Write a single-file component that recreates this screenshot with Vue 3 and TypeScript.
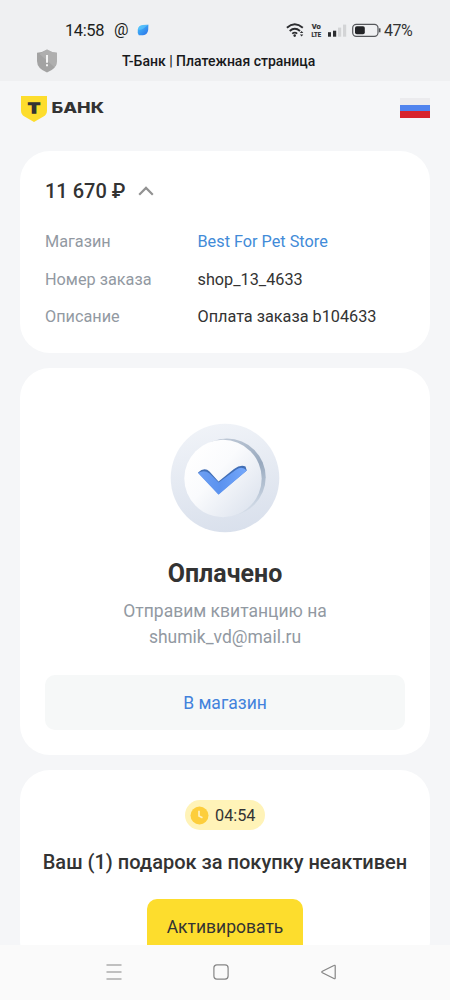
<script setup lang="ts">
interface Detail {
  label: string
  value: string
  link?: boolean
}

const details: Detail[] = [
  { label: 'Магазин', value: 'Best For Pet Store', link: true },
  { label: 'Номер заказа', value: 'shop_13_4633' },
  { label: 'Описание', value: 'Оплата заказа b104633' },
]
</script>

<template>
  <div class="phone">
    <header class="top">
      <div class="status">
        <span class="time">14:58</span>
        <svg class="at" width="15" height="18" viewBox="0 0 15 18">
          <text x="0" y="14" textLength="14.500" lengthAdjust="spacingAndGlyphs">@</text>
        </svg>
        <svg class="leaf" width="12" height="12" viewBox="0 0 12 12">
          <defs>
            <linearGradient id="leaf" x1="0" y1="0" x2="1" y2="1">
              <stop offset="0" stop-color="#45c4fb" />
              <stop offset="1" stop-color="#2b6fe8" />
            </linearGradient>
          </defs>
          <path d="M.8 5.500Q1.500 1.200 6 .9L11.400.7 11.200 6Q10.500 10.800 6 11.200L1.800 11.300Q.2 9 .8 5.500Z" fill="url(#leaf)" />
          <path d="M.8 5.500Q4 6.500 6.500 4.500T11.400.7L6 .9Q1.500 1.200.8 5.500Z" fill="#6ad2ff" opacity=".5" />
        </svg>
        <svg class="signals" width="96" height="20" viewBox="0 0 96 20">
          <g fill="none" stroke="#2c2d30" stroke-width="1.900">
            <path d="M.9 7.700Q8.700.9 16.800 7.700" />
            <path d="M3.700 10.900Q8.800 6.700 14 10.900" />
            <path d="M6.200 13.700Q8.800 11.700 11.200 13.700" stroke-width="1.700" />
          </g>
          <circle cx="8.700" cy="15.600" r="1.300" fill="#2c2d30" />
          <path d="M13.900 13l1.700-2 1.700 2ZM13.900 14.600l1.700 2 1.700-2Z" fill="#2c2d30" />
          <text x="25.700" y="9" textLength="9" lengthAdjust="spacingAndGlyphs" class="volte">Vo</text>
          <text x="25.500" y="16.800" textLength="9.500" lengthAdjust="spacingAndGlyphs" class="volte">LTE</text>
          <rect x="42" y="12.200" width="3" height="4.500" fill="#2c2d30" />
          <rect x="47" y="10.700" width="3.200" height="6" fill="#2c2d30" />
          <rect x="52" y="7.600" width="3.200" height="9.100" fill="#d3d4d6" />
          <rect x="57" y="4.600" width="3.200" height="12.100" fill="#d3d4d6" />
          <rect x="66.700" y="4.300" width="25.300" height="12" rx="3.600" fill="none" stroke="#55575b" stroke-width="1.200" />
          <rect x="69" y="6.300" width="9.800" height="8" rx="1.800" fill="#222326" />
          <path d="M93.700 8.300v4" stroke="#55575b" stroke-width="1.600" />
        </svg>
        <span class="percent">47%</span>
      </div>
      <div class="titlebar">
        <svg class="shield" width="22" height="24" viewBox="0 0 22 24">
          <path d="M11 .5Q15.500 3.500 21 3.700V12Q21 19.500 11 23.500 1 19.500 1 12V3.700Q6.500 3.500 11 .5Z" fill="#a3a3a3" />
          <path d="M11 .5Q15.500 3.500 21 3.700V12Q21 15.500 18.500 18.300L3.500 5Z" fill="#b8b8b8" opacity=".6" />
          <path d="M11 6v7.700M11 15.300v2" stroke="#f4f4f4" stroke-width="2" />
        </svg>
        <span class="title">Т-Банк | Платежная страница</span>
      </div>
    </header>

    <main class="page">
      <div class="brand">
        <svg width="86" height="28" viewBox="0 0 86 28">
          <path d="M1 1h26v14.500q0 4-3.500 6L14 27l-9.500-5.500Q1 19.500 1 15.500Z" fill="#fddd2d" />
          <text x="8" y="18" textLength="12" lengthAdjust="spacingAndGlyphs" class="brand-t">Т</text>
          <text x="31.500" y="18" textLength="52.500" lengthAdjust="spacingAndGlyphs" class="brand-name">БАНК</text>
        </svg>
        <div class="flag"><i class="white"></i><i class="blue"></i><i class="red"></i></div>
      </div>

      <section class="card summary">
        <div class="amount">
          <span class="sum">11 670 ₽</span>
          <svg width="16" height="10" viewBox="0 0 16 10">
            <path d="M1.200 8.700L8 1.900l6.800 6.800" fill="none" stroke="#929292" stroke-width="2.200" />
          </svg>
        </div>
        <dl>
          <div v-for="d in details" :key="d.label" class="row">
            <dt>{{ d.label }}</dt>
            <dd :class="{ link: d.link }">{{ d.value }}</dd>
          </div>
        </dl>
      </section>

      <section class="card paid">
        <svg class="medal" width="110" height="110" viewBox="0 0 110 110">
          <defs>
            <linearGradient id="ring" x1=".4" y1="0" x2=".6" y2="1">
              <stop offset="0" stop-color="#f0f3f8" />
              <stop offset="1" stop-color="#d9e0ec" />
            </linearGradient>
            <linearGradient id="edge" x1=".3" y1="0" x2=".75" y2="1">
              <stop offset="0" stop-color="#c3ccd9" />
              <stop offset=".5" stop-color="#98a9be" />
              <stop offset=".8" stop-color="#b9c6d6" />
              <stop offset="1" stop-color="#dde4ee" />
            </linearGradient>
            <linearGradient id="face" x1=".1" y1=".15" x2=".9" y2=".85">
              <stop offset="0" stop-color="#ffffff" />
              <stop offset=".4" stop-color="#fafbfd" />
              <stop offset="1" stop-color="#dfe5ef" />
            </linearGradient>
            <linearGradient id="tick" x1="0" y1="0" x2="1" y2="0">
              <stop offset="0" stop-color="#6ea0f3" />
              <stop offset=".45" stop-color="#5b92ef" />
              <stop offset="1" stop-color="#75a8fb" />
            </linearGradient>
          </defs>
          <circle cx="55" cy="55" r="54.300" fill="url(#ring)" />
          <circle cx="57" cy="54.300" r="38.700" fill="url(#edge)" />
          <circle cx="53" cy="55.500" r="38.700" fill="url(#face)" />
          <path d="M28 49.500Q34.500 43.500 39.500 48.500L48.500 58.500 64 46Q70.500 41.300 75.500 43.500L76.800 47.500 48.500 71Z" fill="#416eb5" />
          <path d="M28 50Q34.500 46.300 39.500 50.500L48.700 59.500 66 46.700Q72 42.500 76.800 47.500L48.500 71.700Z" fill="url(#tick)" />
        </svg>
        <h1>Оплачено</h1>
        <p>Отправим квитанцию на<br />shumik_vd@mail.ru</p>
        <button class="shop">В магазин</button>
      </section>

      <section class="card gift">
        <div class="timer">
          <svg width="19" height="19" viewBox="0 0 19 19">
            <circle cx="9.500" cy="9.500" r="9" fill="#fdce3c" />
            <path d="M9 4.800v5.200l3.500 1.800" fill="none" stroke="#fff1c0" stroke-width="1.700" />
          </svg>
          <span>04:54</span>
        </div>
        <h2>Ваш (1) подарок за покупку неактивен</h2>
        <button class="activate">Активировать</button>
      </section>
    </main>

    <nav class="nav">
      <svg width="16" height="16" viewBox="0 0 16 16">
        <path d="M.5 1h15M.5 8h15M.5 15h15" stroke="#858585" stroke-width="1.200" />
      </svg>
      <svg width="16" height="16" viewBox="0 0 16 16">
        <rect x=".9" y=".9" width="14.200" height="14.200" rx="3" fill="none" stroke="#858585" stroke-width="1.200" />
      </svg>
      <svg width="16" height="16" viewBox="-.7 0 16 16">
        <path d="M13.200 1.500Q14.500.8 14.500 2.300V13.700Q14.500 15.200 13.200 14.500L1.700 8.700Q.5 8 1.700 7.300Z" fill="none" stroke="#858585" stroke-width="1.200" />
      </svg>
    </nav>
  </div>
</template>

<style>
body { margin: 0; }
</style>

<style scoped>
.phone {
  width: 450px;
  height: 1000px;
  overflow: hidden;
  display: flex;
  flex-direction: column;
  background: #f5f6f8;
  color: #333333;
  font-family: Roboto, "Liberation Sans", sans-serif;
}
.top { height: 81px; flex: none; background: #eff0f2; }
.status {
  display: flex;
  align-items: center;
  height: 20px;
  padding: 20px 0 0 65px;
  color: #1d1e20;
}
.time { width: 48.500px; font-size: 16.500px; letter-spacing: -.4px; }
.at { flex: none; margin-right: 8.500px; font-size: 16px; fill: #1d1e20; }
.leaf { flex: none; }
.signals { flex: none; margin-left: 137px; }
.percent { margin-left: 2px; font-size: 16px; letter-spacing: -.5px; color: #333; }
.titlebar { display: flex; align-items: center; height: 24px; padding: 9px 0 0 36px; }
.title { margin-left: 64px; font-size: 14px; font-weight: 500; color: #18191b; white-space: nowrap; }
.page { flex: 1; min-height: 0; overflow: hidden; display: flex; flex-direction: column; padding: 0 20px; }
.brand { flex: none; display: flex; justify-content: space-between; height: 56px; padding-top: 14px; }
.brand-t { font: 700 15px "Liberation Mono", "DejaVu Sans Mono", monospace; fill: #333; stroke: #333; stroke-width: 1.300px; }
.brand-name { font: 800 14.500px Inter, sans-serif; fill: #333; }
.volte { font: 700 6.500px Roboto, sans-serif; fill: #2c2d30; stroke: #2c2d30; stroke-width: .2px; }
.flag { width: 30px; height: 20px; margin-top: 3px; display: flex; flex-direction: column; }
.flag i { flex: 1; }
.white { background: #ebebee; }
.blue { background: #4f83ee; }
.red { background: #d8232c; }
.card { flex: none; box-sizing: border-box; background: #fff; border-radius: 30px; }
.summary { height: 202px; padding: 28px 25px 0; }
.amount { display: flex; align-items: center; height: 24px; }
.sum { width: 93px; font-size: 20px; font-weight: 500; white-space: nowrap; }
dl { margin: 20px 0 0; }
.row { display: flex; align-items: center; height: 37.500px; font-size: 16.250px; }
dt { width: 152.500px; color: #9299a2; white-space: nowrap; }
dd { margin: 0; white-space: nowrap; }
.link { color: #428bd8; }
.paid {
  height: 387px;
  margin: 15px 0;
  padding: 55px 25px 0;
  display: flex;
  flex-direction: column;
  align-items: center;
}
.medal { flex: none; }
h1 { margin: 26px 0 0; font-size: 25px; line-height: 30px; font-weight: 700; }
p { margin: 9px 0 0; font-size: 17.500px; line-height: 26px; color: #9299a2; text-align: center; white-space: nowrap; }
button { border: 0; padding: 0; font-family: inherit; font-size: 17.500px; }
.shop { width: 360px; height: 55px; margin-top: 25px; border-radius: 10px; background: #f6f8f8; color: #4282dc; }
.gift { height: 200px; display: flex; flex-direction: column; align-items: center; padding-top: 30px; }
.timer {
  box-sizing: border-box;
  display: flex;
  align-items: center;
  gap: 6px;
  width: 80px;
  height: 30px;
  padding-left: 5px;
  border-radius: 15px;
  background: #fff3b8;
  font-size: 16.250px;
}
h2 { margin: 20px 0 0; font-size: 20px; line-height: 24px; font-weight: 500; white-space: nowrap; }
.activate { width: 156px; height: 55px; margin-top: 25px; border-radius: 10px; background: #fddd2d; color: #333; }
.nav {
  flex: none;
  box-sizing: border-box;
  display: flex;
  justify-content: space-between;
  height: 55px;
  padding: 19px 114px 0 106px;
  background: #fafafa;
}
</style>
